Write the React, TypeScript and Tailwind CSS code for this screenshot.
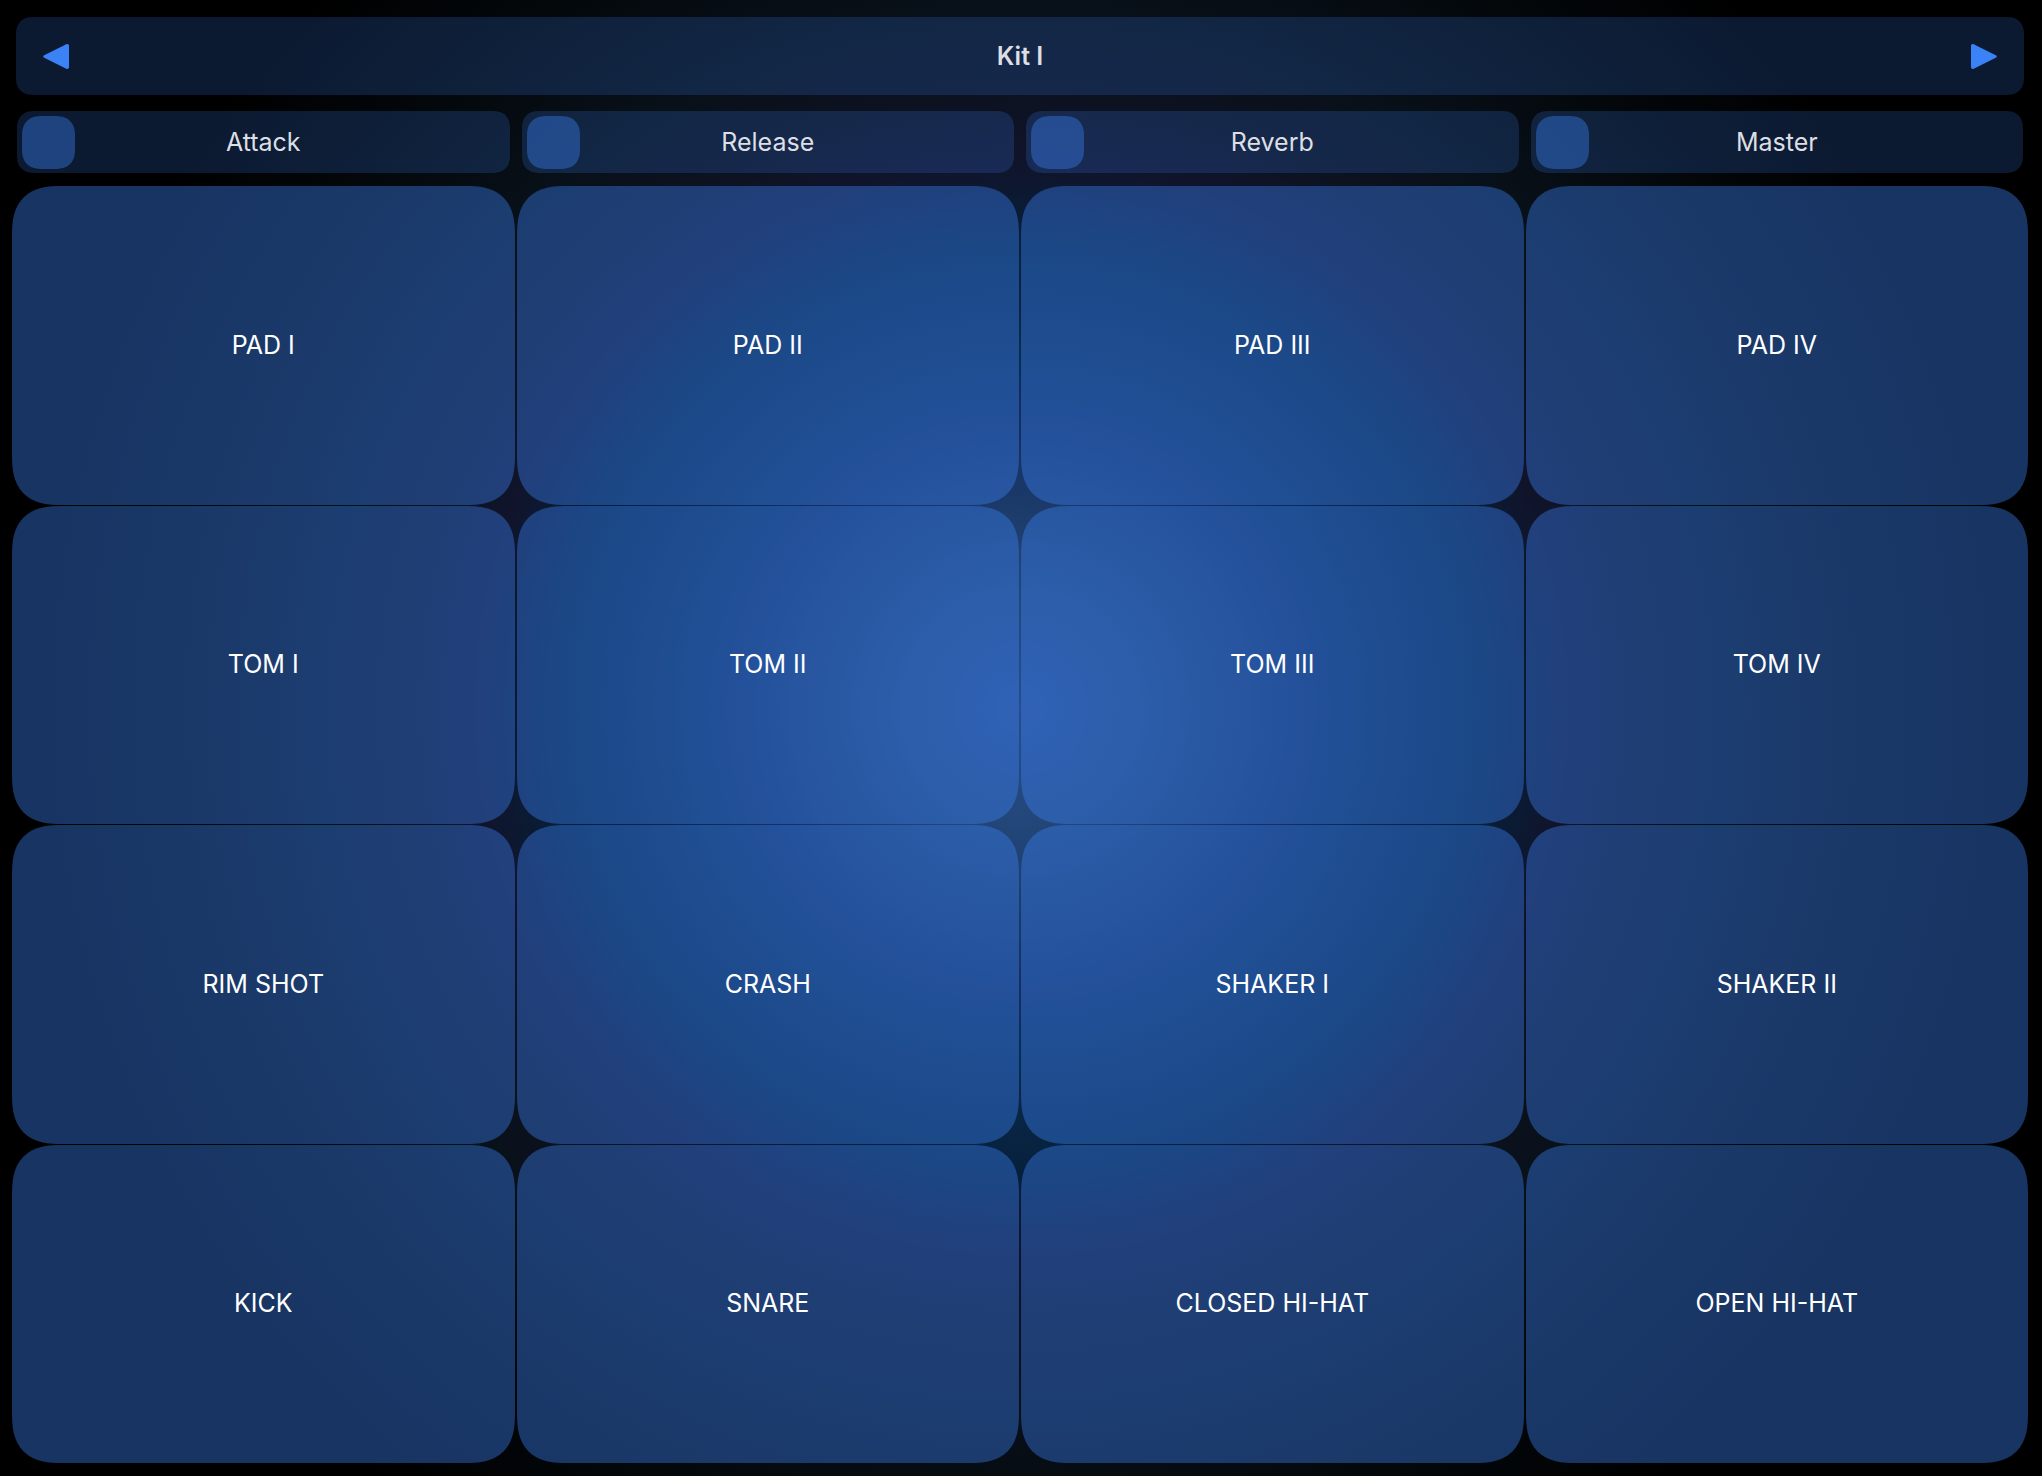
const PADS = [
  "PAD I", "PAD II", "PAD III", "PAD IV",
  "TOM I", "TOM II", "TOM III", "TOM IV",
  "RIM SHOT", "CRASH", "SHAKER I", "SHAKER II",
  "KICK", "SNARE", "CLOSED HI-HAT", "OPEN HI-HAT",
];

const SLIDERS = ["Attack", "Release", "Reverb", "Master"];

function Arrow({ flip = false }: { flip?: boolean }) {
  return (
    <svg viewBox="0 0 26 25" className={flip ? "h-[25px] w-[26px] -scale-x-100" : "h-[25px] w-[26px]"} aria-hidden="true">
      <path
        d="M1.200 11.200 23.300.3c1.400-.7 2.700.1 2.700 1.600v21.200c0 1.500-1.300 2.300-2.700 1.600L1.200 13.800c-1.300-.7-1.300-1.900 0-2.600Z"
        fill="#3b82f6"
      />
    </svg>
  );
}

function Slider({ label }: { label: string }) {
  return (
    <label className="relative flex h-[62px] items-center justify-center rounded-[18px] bg-[#3b82f6]/20 pt-0.5 text-[25px] text-[#dcdfe3] [corner-shape:superellipse(1.3)]">
      <input
        type="range"
        min={0}
        max={100}
        defaultValue={0}
        className="absolute inset-x-[5px] inset-y-1 appearance-none bg-transparent [&::-webkit-slider-thumb]:h-[53px] [&::-webkit-slider-thumb]:w-[53px] [&::-webkit-slider-thumb]:appearance-none [&::-webkit-slider-thumb]:rounded-[20px] [&::-webkit-slider-thumb]:bg-[#3b82f6]/40 [&::-webkit-slider-thumb]:[corner-shape:superellipse(1.3)]"
      />
      <span className="pointer-events-none">{label}</span>
    </label>
  );
}

export default function App() {
  return (
    <main className="flex min-h-screen flex-col bg-black bg-[radial-gradient(circle_at_50%_48%,#284c8d_0px,#23477a_110px,#1c3b6a_200px,#153160_270px,#0e2d54_335px,#0a2748_390px,#06213c_460px,#0b1a33_505px,#10142b_550px,#0c1220_615px,#081019_700px,#04090d_820px,#000000_1000px)] pt-[17px] pr-3.5 pb-[13px] pl-3 font-[Inter,sans-serif]">
      <header className="mx-1 flex h-[78px] items-center justify-between rounded-[18px] bg-[#3b82f6]/20 px-[27px] [corner-shape:superellipse(1.3)]">
        <button type="button" aria-label="Previous kit"><Arrow /></button>
        <h1 className="pt-0.5 text-[25px] font-semibold text-[#dcdfe3]">Kit I</h1>
        <button type="button" aria-label="Next kit"><Arrow flip /></button>
      </header>
      <section className="mx-[5px] mt-4 grid grid-cols-4 gap-3">
        {SLIDERS.map((label) => <Slider key={label} label={label} />)}
      </section>
      <section className="mt-[13px] grid flex-1 grid-cols-4 grid-rows-4 gap-x-[2px] gap-y-px">
        {PADS.map((name) => (
          <button key={name} type="button" className="rounded-[50px] bg-[#3b82f6]/40 text-[25px] text-white [corner-shape:superellipse(1.4)]">
            {name}
          </button>
        ))}
      </section>
    </main>
  );
}
